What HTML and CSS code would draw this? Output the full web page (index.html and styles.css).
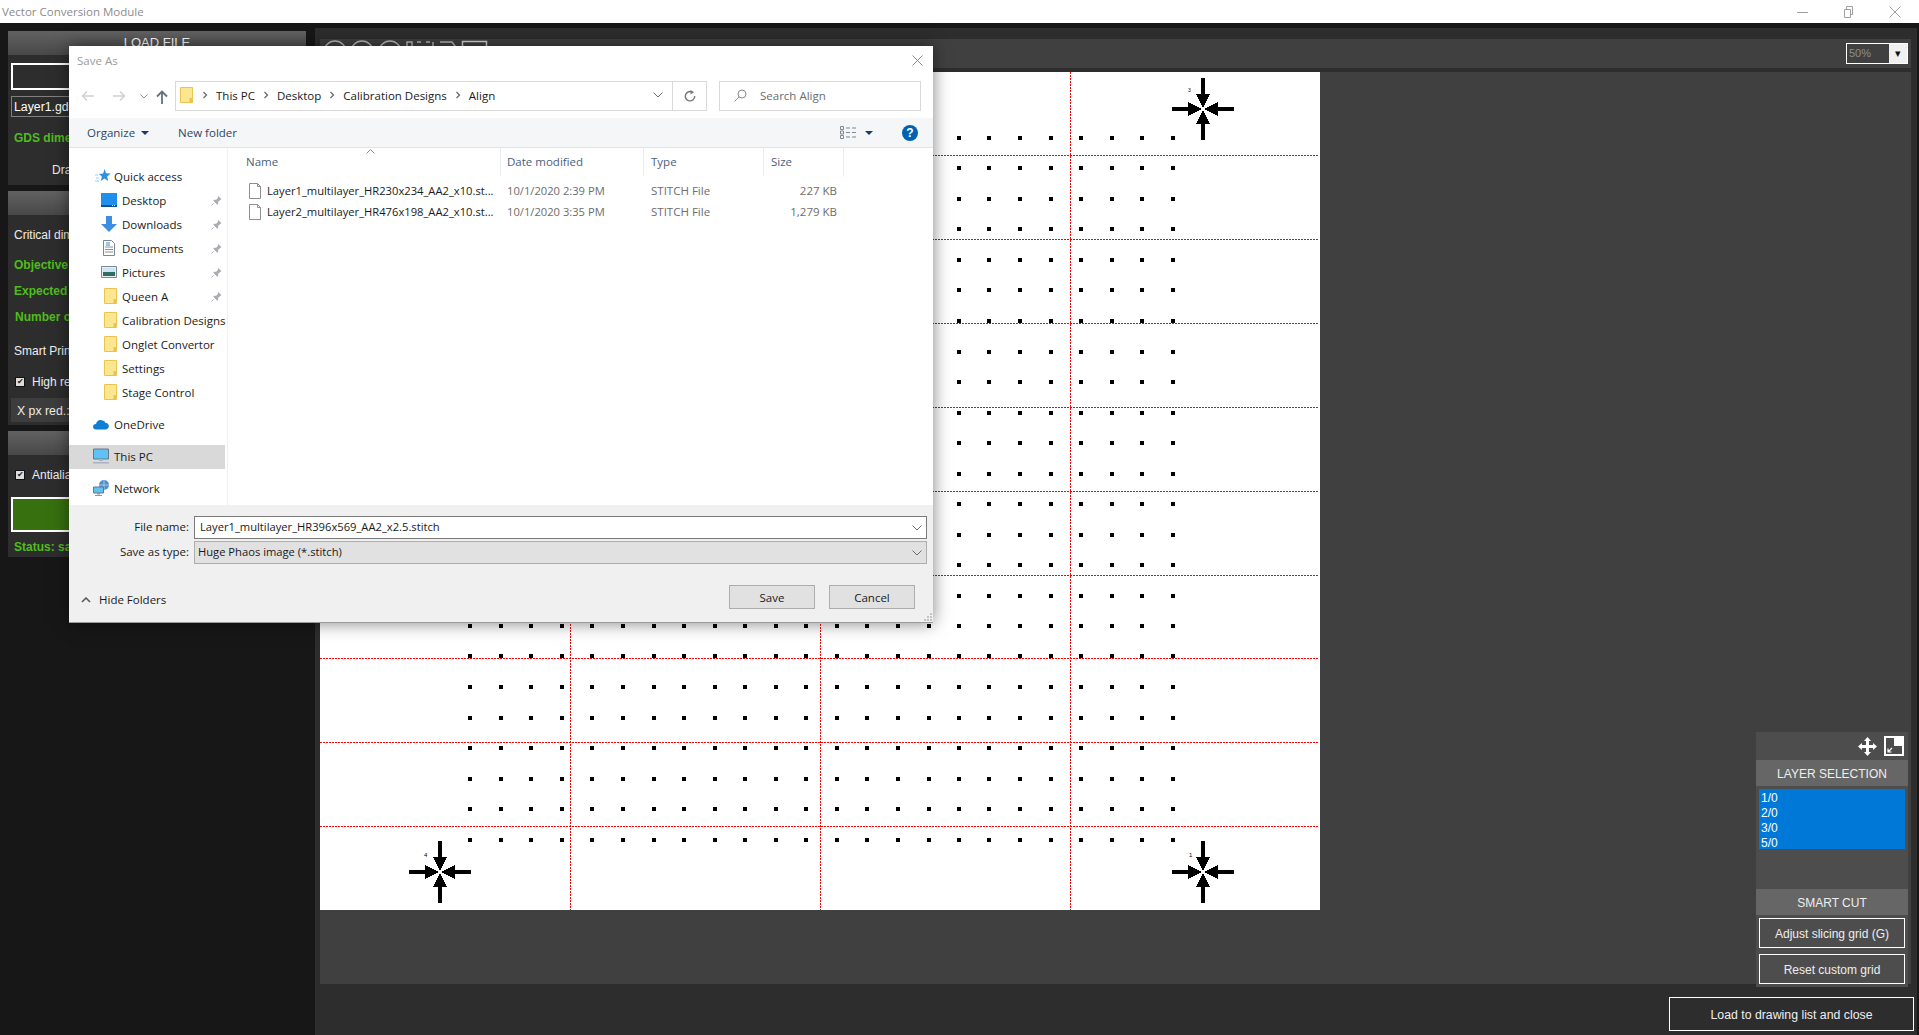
FILE: index.html
```html
<!DOCTYPE html>
<html lang="en">
<head>
<meta charset="utf-8">
<title>Vector Conversion Module</title>
<link rel="stylesheet" href="styles.css">
</head>
<body>
<svg class="defs" width="0" height="0" aria-hidden="true">
  <defs>
    <symbol id="i-folder" viewBox="0 0 16 16"><path d="M3.5.5h12v15h-12z" fill="#fde690" stroke="#eac44f"/><path d="M12.5 11h3v4.5h-3z" fill="#eac44f"/></symbol>
    <symbol id="i-pin" viewBox="0 0 12 12"><path d="M7.5.5l4 4-1.2.6-2.4 2.3-.2 2.4-1 .7-4.200-4.200.7-1 2.400-.2 2.300-2.400z" fill="#a9adb3"/><path d="M3 9L.5 11.500" stroke="#a9adb3"/></symbol>
    <symbol id="i-star" viewBox="0 0 16 16"><path d="M9.500 1l1.600 4.300 4.500.2-3.500 2.900 1.200 4.500-3.800-2.500-3.800 2.500 1.200-4.500-3-2.500 4.300-.4z" fill="#2f8fe0"/><path d="M0 7h3M1 10h3M0 13h4" stroke="#9ccbf2"/></symbol>
    <symbol id="i-desktop" viewBox="0 0 16 16"><path d="M0 1h16v13H0z" fill="#1f8fee"/><path d="M0 13h16v2H0z" fill="#0a4f93"/><path d="M11 13.500h1M13 13.500h1" stroke="#fff"/></symbol>
    <symbol id="i-down" viewBox="0 0 16 16"><path d="M5 0h6v8h5l-8 8-8-8h5z" fill="#3b8ee0"/></symbol>
    <symbol id="i-doc" viewBox="0 0 16 16"><path d="M2.500.5h8l3 3v12h-11z" fill="#fff" stroke="#7d8793"/><path d="M4 7h8M4 9.500h8M4 12h8" stroke="#8a929c"/><path d="M5 3h4M5 5h4" stroke="#2f8fe0"/></symbol>
    <symbol id="i-pic" viewBox="0 0 16 16"><path d="M.5 2.500h15v11H.5z" fill="#e9eef2" stroke="#7d8793"/><path d="M2 4h12v4H2z" fill="#cfe3f2"/><path d="M2 8h12v4H2z" fill="#2f6c62"/></symbol>
    <symbol id="i-cloud" viewBox="0 0 16 16"><path d="M3 13.500c-4-.3-4-5.500 0-5.500 .5-3 3.500-5 6-3.500 1.500-.3 3 .7 3.500 2.500 4.500-.5 4.500 6.500 0 6.500z" fill="#0f7fd6"/></symbol>
    <symbol id="i-pc" viewBox="0 0 16 16"><path d="M.5 1h15v10H.5z" fill="#5fc1f5" stroke="#6b7785"/><path d="M6 11h4v2H6zM0 14h16v1.500H0z" fill="#a9b4c0"/></symbol>
    <symbol id="i-net" viewBox="0 0 16 16"><circle cx="11" cy="5" r="5" fill="#4f8fd0"/><path d="M11 0v10M6 5h10" stroke="#c6dcf0" stroke-width=".7"/><path d="M.5 7h10v6H.5z" fill="#5fc1f5" stroke="#6b7785"/><path d="M4 13h3v1.500H4zM2 15h7v1H2z" fill="#8a96a3"/></symbol>
    <symbol id="i-file" viewBox="0 0 12 16"><path d="M.5.500h8l3 3v12H.5z" fill="#fff" stroke="#8f8f8f"/><path d="M8.500.500v3h3" fill="none" stroke="#8f8f8f"/></symbol>
    <symbol id="i-sep" viewBox="0 0 6 8"><path d="M1.500 1l3 3-3 3" fill="none" stroke="#6a6a6a" stroke-width="1.300"/></symbol>
    <symbol id="i-chev" viewBox="0 0 10 6"><path d="M.5.500L5 5 9.500.500" fill="none" stroke="#6d6d6d"/></symbol>
    <g id="row">
      <rect x="468" width="4" height="4"/><rect x="499" width="4" height="4"/><rect x="529" width="4" height="4"/><rect x="560" width="4" height="4"/>
      <rect x="590" width="4" height="4"/><rect x="621" width="4" height="4"/><rect x="652" width="4" height="4"/><rect x="682" width="4" height="4"/>
      <rect x="713" width="4" height="4"/><rect x="743" width="4" height="4"/><rect x="774" width="4" height="4"/><rect x="804" width="4" height="4"/>
      <rect x="835" width="4" height="4"/><rect x="865" width="4" height="4"/><rect x="896" width="4" height="4"/><rect x="927" width="4" height="4"/>
      <rect x="957" width="4" height="4"/><rect x="987" width="4" height="4"/><rect x="1018" width="4" height="4"/><rect x="1049" width="4" height="4"/>
      <rect x="1079" width="4" height="4"/><rect x="1110" width="4" height="4"/><rect x="1140" width="4" height="4"/><rect x="1171" width="4" height="4"/>
    </g>
    <g id="arm"><path d="M-2-31h4v16h-4z"/><path d="M-7-15H7L0-1z"/></g>
    <g id="target">
      <use href="#arm"/><use href="#arm" transform="rotate(90)"/><use href="#arm" transform="rotate(180)"/><use href="#arm" transform="rotate(270)"/>
    </g>
  </defs>
</svg>

<header class="titlebar">
  <span class="app-title">Vector Conversion Module</span>
  <div class="win-controls">
    <svg class="win-icon" viewBox="0 0 12 12"><path d="M0 6.500h11" stroke="#a0a0a0"/></svg>
    <svg class="win-icon" viewBox="0 0 12 12"><path d="M1.500 3.500h6v8h-6zM3.500 3.500v-3h6v8h-2" fill="none" stroke="#a0a0a0"/></svg>
    <svg class="win-icon" viewBox="0 0 12 12"><path d="M.5.500l11 11M11.500.500l-11 11" stroke="#a0a0a0"/></svg>
  </div>
</header>

<main class="app">
  <aside class="side">
    <section class="panel panel-load">
      <div class="panel-head">LOAD FILE</div>
      <div class="box-outline"></div>
      <div class="box-file">Layer1.gds</div>
      <div class="txt green t-gds">GDS dimensions</div>
      <div class="txt t-draw">Drawing</div>
    </section>
    <section class="panel panel-print">
      <div class="panel-head"></div>
      <div class="txt t-crit">Critical dimension</div>
      <div class="txt green t-obj">Objective</div>
      <div class="txt green t-exp">Expected</div>
      <div class="txt green t-num">Number of</div>
      <div class="txt t-smart">Smart Print</div>
      <div class="check-row t-high"><span class="check">✔</span><span class="txt">High resolution</span></div>
      <div class="strip">X px red.:</div>
    </section>
    <section class="panel panel-save">
      <div class="panel-head"></div>
      <div class="check-row t-anti"><span class="check">✔</span><span class="txt">Antialiasing</span></div>
      <div class="go-btn"></div>
      <div class="txt green t-status">Status: saved</div>
    </section>
  </aside>

  <div class="work">
    <div class="tools">
      <svg class="tool-icons" width="180" height="29" viewBox="0 0 180 29">
        <g fill="none" stroke="#b9b9b9" stroke-width="1.500">
          <circle cx="15" cy="13" r="11"/><circle cx="42" cy="13" r="11"/><circle cx="70" cy="13" r="11"/>
          <path d="M87 3h5v8h-5zM97 3h4M106 3h4M113 3v8M120 3h12l3 4v6"/>
          <path d="M142.500 2.500h24v20h-24z" stroke="#d8d8d8"/>
        </g>
      </svg>
      <div class="zoom-combo"><span class="zoom-val">50%</span><span class="zoom-btn">▾</span></div>
    </div>

    <div class="stage">
      <svg class="sheet" viewBox="320 72 1000 838" width="1000" height="838">
        <g>
          <use href="#row" y="136"/><use href="#row" y="166"/><use href="#row" y="197"/><use href="#row" y="227"/>
          <use href="#row" y="258"/><use href="#row" y="288"/><use href="#row" y="319"/><use href="#row" y="350"/>
          <use href="#row" y="380"/><use href="#row" y="411"/><use href="#row" y="441"/><use href="#row" y="472"/>
          <use href="#row" y="502"/><use href="#row" y="533"/><use href="#row" y="563"/><use href="#row" y="594"/>
          <use href="#row" y="624"/><use href="#row" y="654"/><use href="#row" y="685"/><use href="#row" y="716"/>
          <use href="#row" y="746"/><use href="#row" y="777"/><use href="#row" y="807"/><use href="#row" y="838"/>
        </g>
        <g class="cross-set">
          <use href="#target" transform="translate(440 109)"/>
          <use href="#target" transform="translate(1203 109)"/>
          <use href="#target" transform="translate(440 872)"/>
          <use href="#target" transform="translate(1203 872)"/>
        </g>
        <text class="mark" x="424" y="857">4</text>
        <text class="mark mark-small" x="1188" y="92">3</text>
        <text class="mark" x="1189" y="857">1</text>
        <path class="cut" d="M320 155.500H1318M320 239.500H1318M320 323.500H1318M320 407.500H1318M320 491.500H1318M320 575.500H1318M320 658.500H1318M320 742.500H1318M320 826.500H1318M570.500 72V910M820.500 72V910M1070.500 72V910"/>
      </svg>

      <div class="float-panel">
        <div class="float-icons">
          <svg width="19" height="19" viewBox="0 0 19 19"><path d="M9.500 0l3.500 4h-2v4h4V6l4 3.500-4 3.500v-2h-4v4h2l-3.500 4L6 15h2v-4H4v2L0 9.500 4 6v2h4V4H6z" fill="#fff"/></svg>
          <svg width="20" height="20" viewBox="0 0 20 20"><path d="M1 1h18v18H1z" fill="none" stroke="#fff" stroke-width="2"/><path d="M10 1h9v9h-9z" fill="#fff"/><path d="M4 16l4-4M4 12.500V16h3.500" fill="none" stroke="#fff" stroke-width="1.200"/></svg>
        </div>
        <div class="float-head">LAYER SELECTION</div>
        <ul class="layers">
          <li>1/0</li><li>2/0</li><li>3/0</li><li>5/0</li>
        </ul>
        <div class="float-head">SMART CUT</div>
        <button class="ghost-btn">Adjust slicing grid (G)</button>
        <button class="ghost-btn">Reset custom grid</button>
      </div>
    </div>

    <div class="bottom"><button class="ghost-btn load-btn">Load to drawing list and close</button></div>
  </div>
</main>

<div class="dialog">
  <div class="dlg-title">
    <span>Save As</span>
    <svg class="dlg-close" width="11" height="11" viewBox="0 0 11 11"><path d="M.5.500l10 10M10.500.500l-10 10" stroke="#8a8a8a"/></svg>
  </div>

  <div class="dlg-nav">
    <svg class="nav-a" width="14" height="12" viewBox="0 0 14 12"><path d="M13 6H2M6 1.500L1.500 6 6 10.500" fill="none" stroke="#d0d0d0" stroke-width="1.500"/></svg>
    <svg class="nav-b" width="14" height="12" viewBox="0 0 14 12"><path d="M1 6h11M8 1.500L12.500 6 8 10.500" fill="none" stroke="#d0d0d0" stroke-width="1.500"/></svg>
    <svg class="nav-c" width="8" height="5" viewBox="0 0 10 6"><use href="#i-chev"/></svg>
    <svg class="nav-d" width="12" height="14" viewBox="0 0 12 14"><path d="M6 14V2M1 6.500L6 1.500l5 5" fill="none" stroke="#63717f" stroke-width="1.800"/></svg>
    <div class="address">
      <svg class="addr-folder" width="16" height="16"><use href="#i-folder"/></svg>
      <svg class="sep" width="6" height="8"><use href="#i-sep"/></svg><span>This PC</span>
      <svg class="sep" width="6" height="8"><use href="#i-sep"/></svg><span>Desktop</span>
      <svg class="sep" width="6" height="8"><use href="#i-sep"/></svg><span>Calibration Designs</span>
      <svg class="sep" width="6" height="8"><use href="#i-sep"/></svg><span>Align</span>
      <svg class="addr-drop" width="10" height="6"><use href="#i-chev"/></svg>
      <span class="addr-refresh"><svg width="12" height="12" viewBox="0 0 12 12"><path d="M8.500 2.200A4.700 4.700 0 1 0 10.700 6" fill="none" stroke="#777" stroke-width="1.400"/><path d="M6.500 0v4.500L10 2.200z" fill="#777"/></svg></span>
    </div>
    <div class="search">
      <svg width="13" height="13" viewBox="0 0 13 13"><circle cx="8" cy="5" r="4" fill="none" stroke="#8a8a8a"/><path d="M5 8l-4.500 4.500" stroke="#b58a5a"/></svg>
      <span>Search Align</span>
    </div>
  </div>

  <div class="dlg-bar">
    <span class="bar-org">Organize</span><span class="caret"></span>
    <span class="bar-new">New folder</span>
    <svg class="view-ic" width="17" height="13" viewBox="0 0 17 13"><path d="M.5.500h3v3h-3zM.5 5h3v3h-3zM.5 9.500h3v3h-3z" fill="none" stroke="#7d8793"/><path d="M6 2h4M12 2h4M6 6.500h4M12 6.500h4M6 11h4M12 11h4" stroke="#7d8793"/></svg>
    <span class="caret caret-view"></span>
    <span class="help">?</span>
  </div>

  <div class="dlg-body">
    <nav class="tree">
      <div class="node lvl1 first"><svg width="16" height="16"><use href="#i-star"/></svg><span>Quick access</span></div>
      <div class="node lvl2"><svg width="16" height="16"><use href="#i-desktop"/></svg><span>Desktop</span><svg class="pin" width="11" height="11"><use href="#i-pin"/></svg></div>
      <div class="node lvl2"><svg width="16" height="16"><use href="#i-down"/></svg><span>Downloads</span><svg class="pin" width="11" height="11"><use href="#i-pin"/></svg></div>
      <div class="node lvl2"><svg width="16" height="16"><use href="#i-doc"/></svg><span>Documents</span><svg class="pin" width="11" height="11"><use href="#i-pin"/></svg></div>
      <div class="node lvl2"><svg width="16" height="16"><use href="#i-pic"/></svg><span>Pictures</span><svg class="pin" width="11" height="11"><use href="#i-pin"/></svg></div>
      <div class="node lvl2"><svg width="16" height="16"><use href="#i-folder"/></svg><span>Queen A</span><svg class="pin" width="11" height="11"><use href="#i-pin"/></svg></div>
      <div class="node lvl2"><svg width="16" height="16"><use href="#i-folder"/></svg><span>Calibration Designs</span></div>
      <div class="node lvl2"><svg width="16" height="16"><use href="#i-folder"/></svg><span>Onglet Convertor</span></div>
      <div class="node lvl2"><svg width="16" height="16"><use href="#i-folder"/></svg><span>Settings</span></div>
      <div class="node lvl2"><svg width="16" height="16"><use href="#i-folder"/></svg><span>Stage Control</span></div>
      <div class="node lvl1 gap"><svg width="16" height="16"><use href="#i-cloud"/></svg><span>OneDrive</span></div>
      <div class="node lvl1 gap selected"><svg width="16" height="16"><use href="#i-pc"/></svg><span>This PC</span></div>
      <div class="node lvl1 gap"><svg width="16" height="16"><use href="#i-net"/></svg><span>Network</span></div>
    </nav>
    <div class="files">
      <svg class="sort" width="9" height="5" viewBox="0 0 9 5"><path d="M.5 4.500l4-4 4 4" fill="none" stroke="#8a8a8a"/></svg>
      <div class="file-head">
        <span>Name</span><span>Date modified</span><span>Type</span><span>Size</span>
      </div>
      <div class="file-row">
        <span class="f-name"><svg width="12" height="16"><use href="#i-file"/></svg>Layer1_multilayer_HR230x234_AA2_x10.st...</span>
        <span class="f-date">10/1/2020 2:39 PM</span><span class="f-type">STITCH File</span><span class="f-size">227 KB</span>
      </div>
      <div class="file-row">
        <span class="f-name"><svg width="12" height="16"><use href="#i-file"/></svg>Layer2_multilayer_HR476x198_AA2_x10.st...</span>
        <span class="f-date">10/1/2020 3:35 PM</span><span class="f-type">STITCH File</span><span class="f-size">1,279 KB</span>
      </div>
    </div>
  </div>

  <div class="dlg-foot">
    <div class="form-row">
      <label>File name:</label>
      <div class="field field-name"><span>Layer1_multilayer_HR396x569_AA2_x2.5.stitch</span><svg width="10" height="6"><use href="#i-chev"/></svg></div>
    </div>
    <div class="form-row">
      <label>Save as type:</label>
      <div class="field field-type"><span>Huge Phaos image (*.stitch)</span><svg width="10" height="6"><use href="#i-chev"/></svg></div>
    </div>
    <div class="foot-actions">
      <span class="hide-folders"><svg width="10" height="6" viewBox="0 0 10 6"><path d="M1 5l4-4 4 4" fill="none" stroke="#555" stroke-width="1.500"/></svg>Hide Folders</span>
      <button class="win-btn">Save</button>
      <button class="win-btn">Cancel</button>
    </div>
    <svg class="grip" width="8" height="8" viewBox="0 0 8 8"><path d="M6 0h2v2H6zM3 3h2v2H3zM6 3h2v2H6zM0 6h2v2H0zM3 6h2v2H3zM6 6h2v2H6z" fill="#c4c4c4"/></svg>
  </div>
</div>
</body>
</html>
```
FILE: styles.css
```css
* { box-sizing: border-box; }
html, body { margin: 0; height: 100%; }
body {
  position: relative;
  width: 1919px;
  height: 1035px;
  overflow: hidden;
  background: #171717;
  font-family: "Liberation Sans", Arial, sans-serif;
  font-size: 12px;
  color: #fff;
}
.defs { position: absolute; }

/* title bar */
.titlebar {
  height: 23px;
  background: #fff;
  display: flex;
  align-items: center;
  justify-content: space-between;
}
.app-title {
  padding-left: 2px;
  color: #8c8c8c;
  font: 11.500px "Open Sans", sans-serif;
}
.win-controls { display: flex; gap: 34px; padding-right: 18px; }
.win-icon { width: 12px; height: 12px; }

/* main */
.app { display: flex; height: 1012px; }
.side {
  width: 315px;
  padding: 8px 9px 0 8px;
  display: flex;
  flex-direction: column;
  gap: 6px;
  flex: none;
}
.panel { background: #2d2d2d; overflow: hidden; white-space: nowrap; }
.panel-load { height: 154px; }
.panel-print { height: 234px; }
.panel-save { height: 126px; }
.panel-head {
  height: 24px;
  text-align: center;
  line-height: 24px;
  font-size: 13px;
  background: linear-gradient(#626262, #484848);
}
.txt { font-size: 12px; line-height: 16px; color: #eee; }
.green { color: #4fbd1c; font-weight: 700; }

.box-outline { height: 27px; margin: 8px 0 0 3px; border: 2px solid #fff; width: 286px; }
.box-file {
  height: 21px;
  margin: 6px 0 0 3px;
  width: 286px;
  border: 1px solid #808080;
  font-size: 12.300px;
  line-height: 20px;
  padding-left: 2px;
}
.t-gds { margin: 13px 0 0 6px; }
.t-draw { margin: 16px 0 0 44px; }
.t-crit { margin: 12px 0 0 6px; }
.t-obj { margin: 14px 0 0 6px; }
.t-exp { margin: 10px 0 0 6px; }
.t-num { margin: 10px 0 0 7px; }
.t-smart { margin: 18px 0 0 6px; }
.check-row { display: flex; align-items: center; gap: 7px; height: 16px; margin-left: 7px; }
.check {
  width: 10px;
  height: 10px;
  background: #ddd;
  border: 1px solid #111;
  color: #222;
  font-size: 8px;
  line-height: 8px;
  text-align: center;
}
.t-high { margin-top: 15px; }
.strip {
  margin: 8px 0 0 3px;
  height: 24px;
  width: 286px;
  background: #3d3d3d;
  color: #eee;
  font-size: 12.300px;
  line-height: 27px;
  padding-left: 6px;
}
.t-anti { margin-top: 12px; }
.go-btn { height: 35px; margin: 14px 0 0 3px; width: 286px; background: #37710f; border: 2px solid #fff; }
.t-status { margin: 7px 0 0 6px; }

/* work area */
.work {
  flex: none;
  width: 1602px;
  margin-top: 5px;
  height: 1007px;
  background: #2d2d2d;
  padding: 11px 0 0 5px;
  display: flex;
  flex-direction: column;
}
.tools {
  height: 29px;
  width: 1591px;
  background: #404040;
  flex: none;
  display: flex;
  align-items: center;
  justify-content: space-between;
  padding-right: 3px;
}
.tool-icons { align-self: flex-start; }
.zoom-combo {
  width: 62px;
  height: 21px;
  border: 1px solid #fff;
  display: flex;
  background: #404040;
}
.zoom-val { flex: 1; color: #8e8e8e; font-size: 11px; line-height: 19px; padding-left: 2px; }
.zoom-btn { width: 18px; background: #f0f0f0; color: #111; text-align: center; font-size: 11px; line-height: 19px; }

.stage {
  position: relative;
  margin-top: 4px;
  height: 912px;
  width: 1591px;
  background: #404040;
  flex: none;
}
.sheet { display: block; background: #fff; shape-rendering: crispEdges; }
.mark { font: 6px "Liberation Sans", sans-serif; }
.mark-small { font-size: 5px; }
.cut { fill: none; stroke: #f00; stroke-width: 1; stroke-dasharray: 2 1; }

.float-panel {
  position: absolute;
  left: 1436px;
  top: 660px;
  width: 152px;
  height: 255px;
  background: #4d4d4d;
  display: flex;
  flex-direction: column;
  align-items: center;
}
.float-icons {
  height: 28px;
  width: 100%;
  display: flex;
  align-items: center;
  justify-content: flex-end;
  gap: 7px;
  padding-right: 4px;
}
.float-head {
  width: 100%;
  height: 26px;
  flex: none;
  background: #666;
  text-align: center;
  line-height: 28px;
  color: #eee;
}
.layers {
  list-style: none;
  margin: 3px 0 40px;
  padding: 2px 0 0 2px;
  width: 146px;
  height: 60px;
  background: #0078d7;
}
.layers li { height: 15px; line-height: 15px; }
.ghost-btn {
  display: block;
  width: 146px;
  height: 30px;
  margin-top: 3px;
  background: #4d4d4d;
  border: 1px solid #fff;
  color: #eee;
  font: 12px "Liberation Sans", sans-serif;
  padding: 2px 0 0;
}
.ghost-btn + .ghost-btn { margin-top: 6px; }

.bottom { flex: 1; display: flex; justify-content: flex-end; align-items: flex-start; padding: 13px 3px 0 0; }
.load-btn { width: 245px; height: 34px; margin: 0; background: #2d2d2d; font-size: 12.300px; }

/* save dialog */
.dialog {
  position: absolute;
  left: 69px;
  top: 46px;
  width: 864px;
  height: 577px;
  background: #fff;
  color: #1a1a1a;
  box-shadow: 0 0 16px rgba(0, 0, 0, .5);
  font: 11.500px "Open Sans", sans-serif;
  display: flex;
  flex-direction: column;
}
.dlg-title {
  height: 35px;
  flex: none;
  padding: 0 10px 7px 8px;
  display: flex;
  align-items: center;
  justify-content: space-between;
  color: #9a9a9a;
}
.dlg-nav { height: 37px; flex: none; display: flex; align-items: flex-start; position: relative; }
.nav-a { margin: 9px 0 0 12px; }
.nav-b { margin: 9px 0 0 17px; }
.nav-c { margin: 13px 0 0 14px; }
.nav-d { margin: 9px 0 0 8px; }
.address {
  margin-left: 7px;
  width: 532px;
  height: 30px;
  border: 1px solid #d9d9d9;
  display: flex;
  align-items: center;
  padding: 0 0 2px 1px;
}
.addr-folder { margin-right: 6px; }
.sep { margin: 0 8px 0 3px; flex: none; }
.address span + .sep { margin-left: 8px; }
.addr-drop { margin-left: auto; margin-right: 9px; }
.addr-refresh {
  width: 34px;
  height: 28px;
  margin-bottom: -2px;
  border-left: 1px solid #d9d9d9;
  display: flex;
  align-items: center;
  justify-content: center;
}
.search {
  margin-left: 12px;
  width: 202px;
  height: 30px;
  border: 1px solid #d9d9d9;
  display: flex;
  align-items: center;
  gap: 13px;
  padding: 0 0 2px 14px;
  color: #6d6d6d;
}

.dlg-bar {
  height: 30px;
  flex: none;
  background: #f5f6f7;
  border-bottom: 1px solid #e3e3e3;
  display: flex;
  align-items: center;
  padding: 0 15px 0 18px;
  color: #2d4766;
}
.caret { width: 0; height: 0; border: 4px solid transparent; border-top: 4px solid #1c3b63; border-bottom: 0; margin-left: 6px; }
.bar-new { margin-left: 29px; }
.view-ic { margin-left: auto; }
.caret-view { margin-left: 8px; border-width: 4px; border-bottom: 0; }
.help {
  width: 16px;
  height: 16px;
  margin-left: 29px;
  border-radius: 50%;
  background: #0063b1;
  color: #fff;
  text-align: center;
  font: 700 12px/16px "Liberation Sans", sans-serif;
}

.dlg-body { flex: 1; display: flex; min-height: 0; }
.tree { width: 159px; flex: none; border-right: 1px solid #f0f0f0; padding-top: 17px; }
.node { height: 24px; width: 156px; display: flex; align-items: center; white-space: nowrap; padding-bottom: 2px; }
.node svg { flex: none; }
.lvl1 { padding-left: 24px; gap: 5px; }
.lvl2 { padding-left: 32px; gap: 5px; }
.first svg { margin-left: 2px; margin-right: -2px; }
.gap { margin-top: 8px; }
.selected { background: #d9d9d9; }
.pin { margin-left: auto; margin-right: 3px; }

.files { flex: 1; position: relative; }
.sort { position: absolute; left: 138px; top: 1px; }
.file-head {
  display: grid;
  grid-template-columns: 273px 143px 120px 80px;
  height: 26px;
  color: #4c607a;
}
.file-head span { border-right: 1px solid #ececec; line-height: 28px; padding-left: 6px; }
.file-head span:first-child { padding-left: 18px; }
.file-head span:nth-child(n+3) { padding-left: 7px; }
.file-row {
  display: grid;
  grid-template-columns: 273px 143px 120px 73px;
  height: 21px;
  align-items: center;
  color: #6d6d6d;
  white-space: nowrap;
}
.file-head + .file-row { margin-top: 6px; }
.file-row span { padding-left: 6px; }
.file-row .f-type { padding-left: 7px; }
.f-date { font-size: 11.200px; }
.f-name { color: #1a1a1a; font-size: 11.200px; display: flex; align-items: center; gap: 6px; padding-left: 21px !important; }
.f-size { text-align: right; }

.dlg-foot {
  height: 118px;
  flex: none;
  background: #f0f0f0;
  border-bottom: 1px solid #9b9b9b;
  padding-top: 11px;
  position: relative;
}
.form-row { display: flex; align-items: center; margin-bottom: 2px; padding-left: 7px; }
.form-row label { width: 113px; text-align: right; margin-right: 5px; padding-bottom: 3px; }
.field {
  width: 733px;
  height: 23px;
  display: flex;
  align-items: center;
  justify-content: space-between;
  padding: 0 4px 2px 5px;
  font-size: 11.200px;
}
.field svg { margin-top: 2px; }
.field-name { background: #fff; border: 1px solid #7a7a7a; }
.field-type { background: #e1e1e1; border: 1px solid #adadad; padding-left: 3px; }
.foot-actions {
  display: flex;
  align-items: center;
  margin-top: 21px;
  padding-left: 12px;
}
.hide-folders { display: flex; align-items: center; gap: 8px; margin-top: 5px; margin-right: auto; }
.win-btn {
  width: 86px;
  height: 24px;
  background: #e1e1e1;
  border: 1px solid #adadad;
  color: #1a1a1a;
  font: 11.500px "Open Sans", sans-serif;
  padding: 0;
  margin-right: 14px;
}
.win-btn + .win-btn { margin-right: 18px; }
.grip { position: absolute; right: 1px; bottom: 1px; }
```
